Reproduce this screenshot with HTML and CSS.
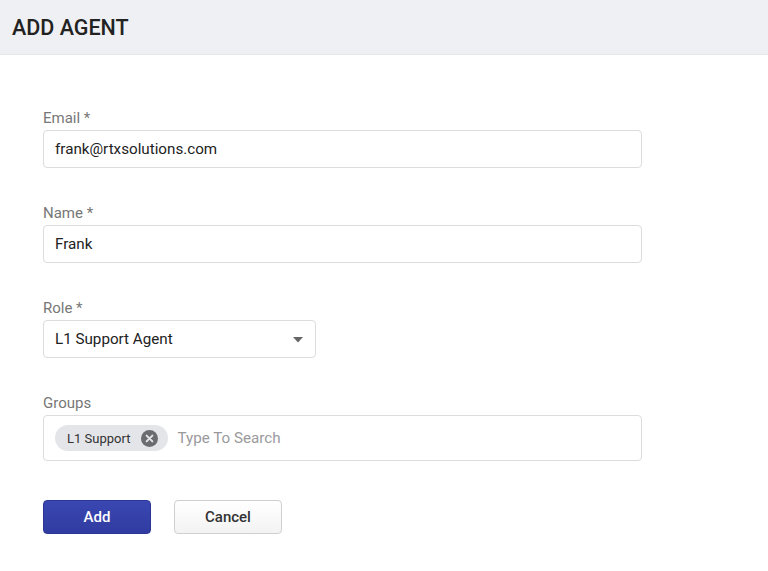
FILE: index.html
```html
<!DOCTYPE html>
<html>
<head>
<meta charset="utf-8">
<link rel="stylesheet" href="styles.css">
</head>
<body>
<header class="topbar"><h1 class="title">ADD AGENT</h1></header>
<main class="content">
  <form class="form">
    <div class="field">
      <label class="label">Email *</label>
      <div class="input">frank@rtxsolutions.com</div>
    </div>
    <div class="field">
      <label class="label">Name *</label>
      <div class="input">Frank</div>
    </div>
    <div class="field">
      <label class="label">Role *</label>
      <div class="input select">
        <span>L1 Support Agent</span>
        <svg class="caret" width="10" height="6" viewBox="0 0 10 6"><path d="M0 0H10L5 5.5Z" fill="#666"/></svg>
      </div>
    </div>
    <div class="field">
      <label class="label">Groups</label>
      <div class="input tags">
        <span class="chip">L1 Support
          <svg class="chip-x" width="17" height="17" viewBox="0 0 17 17"><circle cx="8.5" cy="8.5" r="8.5" fill="#6b6c70"/><path d="M5.6 5.6L11.4 11.4M11.4 5.6L5.6 11.4" stroke="#e4e5e9" stroke-width="2" stroke-linecap="round"/></svg>
        </span>
        <span class="placeholder">Type To Search</span>
      </div>
    </div>
    <div class="actions">
      <button type="button" class="btn btn-primary">Add</button>
      <button type="button" class="btn btn-secondary">Cancel</button>
    </div>
  </form>
</main>
</body>
</html>
```
FILE: styles.css
```css
* { box-sizing: border-box; }
html, body { margin: 0; padding: 0; background: #fff; }
body { font-family: Roboto, "Liberation Sans", Arial, sans-serif; color: #222; }
.topbar {
  height: 55px;
  background: #eff0f3;
  border-bottom: 1px solid #e6e7ea;
  display: flex;
  align-items: center;
  padding-left: 12px;
}
.title { margin: 0; font-size: 21.5px; font-weight: 500; color: #222; }
.content { padding: 54px 0 0 43px; }
.form { display: flex; flex-direction: column; gap: 36px; width: 599px; }
.field { display: flex; flex-direction: column; }
.label { font-size: 15px; line-height: 18px; color: #777; margin-bottom: 3px; }
.input {
  height: 38px;
  border: 1px solid #dcdcdf;
  border-radius: 4px;
  display: flex;
  align-items: center;
  padding: 0 11px;
  font-size: 15.2px;
  color: #222;
  background: #fff;
}
.select { width: 273px; justify-content: space-between; padding-right: 12px; }
.caret { margin-top: 1px; }
.tags { height: 46px; padding: 0 11px; gap: 9px; }
.chip {
  display: inline-flex;
  align-items: center;
  height: 26px;
  padding: 0 10px 0 12px;
  border-radius: 13px;
  background: #e4e5e9;
  font-size: 13px;
  color: #333;
  gap: 11px;
}
.placeholder { color: #9a9a9d; font-size: 15.2px; }
.actions { display: flex; gap: 23px; margin-top: 3px; }
.btn {
  width: 108px;
  height: 34px;
  border-radius: 4px;
  font-family: inherit;
  font-size: 15px;
  font-weight: 500;
  cursor: pointer;
}
.btn-primary {
  background: linear-gradient(#3a47b2, #303ca0);
  border: 1px solid #2c3795;
  color: #fff;
}
.btn-secondary {
  background: linear-gradient(#fff, #f3f3f4);
  border: 1px solid #cfcfd3;
  color: #333;
}
```
